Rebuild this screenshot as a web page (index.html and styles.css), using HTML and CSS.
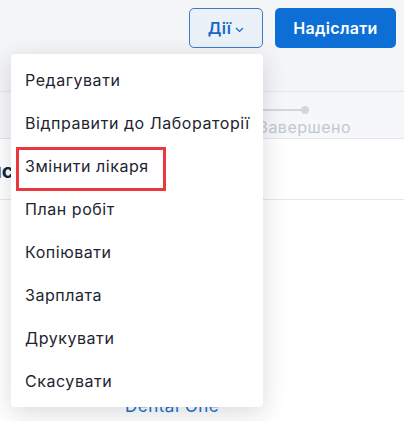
FILE: index.html
```html
<!DOCTYPE html>
<html lang="uk">
<head>
  <meta charset="UTF-8" />
  <meta name="viewport" content="width=device-width, initial-scale=1.0" />
  <title>Візит - Дії</title>
  <link rel="stylesheet" href="styles.css">
</head>
<body>

  <div class="page">
    <div class="toolbar">
      <button class="btn btn-outline">Дії
        <svg class="chevron" width="9" height="6" viewBox="0 0 9 6"><path d="M1 1l3.5 3.5L8 1" fill="none" stroke="currentColor" stroke-width="1.2"/></svg>
      </button>
      <button class="btn btn-primary">Надіслати</button>
    </div>

    <div class="steps">
      <div class="step-track">
        <span class="step-line"></span>
        <span class="step-dot"></span>
      </div>
      <div class="step-label">Завершено</div>
    </div>

    <div class="section">
      <h2 class="section-title">Фінанси</h2>
    </div>

    <div class="section-body">
      <a class="clinic-link" href="#">Dental One</a>
    </div>

    <ul class="menu">
      <li class="menu-item">Редагувати</li>
      <li class="menu-item">Відправити до Лабораторії</li>
      <li class="menu-item marked">Змінити лікаря</li>
      <li class="menu-item">План робіт</li>
      <li class="menu-item">Копіювати</li>
      <li class="menu-item">Зарплата</li>
      <li class="menu-item">Друкувати</li>
      <li class="menu-item">Скасувати</li>
    </ul>
  </div>

</body>
</html>
```

FILE: styles.css
```css
* {
    box-sizing: border-box;
}

body {
    margin: 0;
    font-family: Inter, "Noto Sans", sans-serif;
    color: #1f2733;
    background: #fff;
}

.page {
    position: relative;
    width: 404px;
    height: 421px;
    overflow: hidden;
}

.toolbar {
    display: flex;
    justify-content: flex-end;
    gap: 12px;
    padding: 8px 8px 0 0;
    height: 92px;
    background: #f4f5f7;
    border-bottom: 1px solid #e4e6ea;
}

.btn {
    height: 40px;
    border-radius: 5px;
    font-family: inherit;
    font-size: 16px;
    font-weight: 600;
    letter-spacing: 0.3px;
    cursor: pointer;
}

.btn-outline {
    width: 74px;
    display: flex;
    align-items: center;
    justify-content: center;
    gap: 4px;
    background: #ebf1f9;
    color: #1766c4;
    border: 1px solid #3a7cc7;
}

.btn-outline .chevron {
    margin-top: 3px;
}

.btn-primary {
    width: 121px;
    background: #0d6fd5;
    color: #fff;
    border: none;
}

.steps {
    height: 47px;
    padding: 10px 0 0 258px;
    background: #f6f7f9;
    border-bottom: 1px solid #e4e6ea;
}

.step-track {
    display: flex;
    align-items: center;
    height: 16px;
    padding-left: 5px;
}

.step-line {
    width: 38px;
    height: 2px;
    background: #d3d7dd;
}

.step-dot {
    width: 8px;
    height: 8px;
    border-radius: 50%;
    background: #d3d7dd;
}

.step-label {
    font-size: 16px;
    line-height: 19px;
    letter-spacing: 0.5px;
    color: #c2c7cf;
}

.section {
    height: 61px;
    border-bottom: 1px solid #e4e6ea;
    display: flex;
    align-items: center;
}

.section-title {
    margin: 4px 0 0 -57px;
    font-size: 20px;
    font-weight: 700;
    color: #17233a;
}

.section-body {
    padding: 196px 0 0 125px;
}

.clinic-link {
    color: #1a6fcf;
    font-size: 17px;
    letter-spacing: 0.5px;
    text-decoration: none;
}

.menu {
    position: absolute;
    top: 54px;
    left: 11px;
    width: 252px;
    margin: 0;
    padding: 4px 0 5px;
    list-style: none;
    background: #fff;
    border-radius: 4px;
    box-shadow: 0 6px 24px rgba(20, 30, 50, 0.16);
}

.menu-item {
    position: relative;
    height: 43px;
    display: flex;
    align-items: center;
    padding-left: 14px;
    font-size: 16px;
    letter-spacing: 0.55px;
    color: #1d2530;
    white-space: nowrap;
}

.menu-item.marked::after {
    content: "";
    position: absolute;
    left: 5px;
    top: 3px;
    width: 144px;
    height: 38px;
    border: 3px solid #e8383d;
}
```
